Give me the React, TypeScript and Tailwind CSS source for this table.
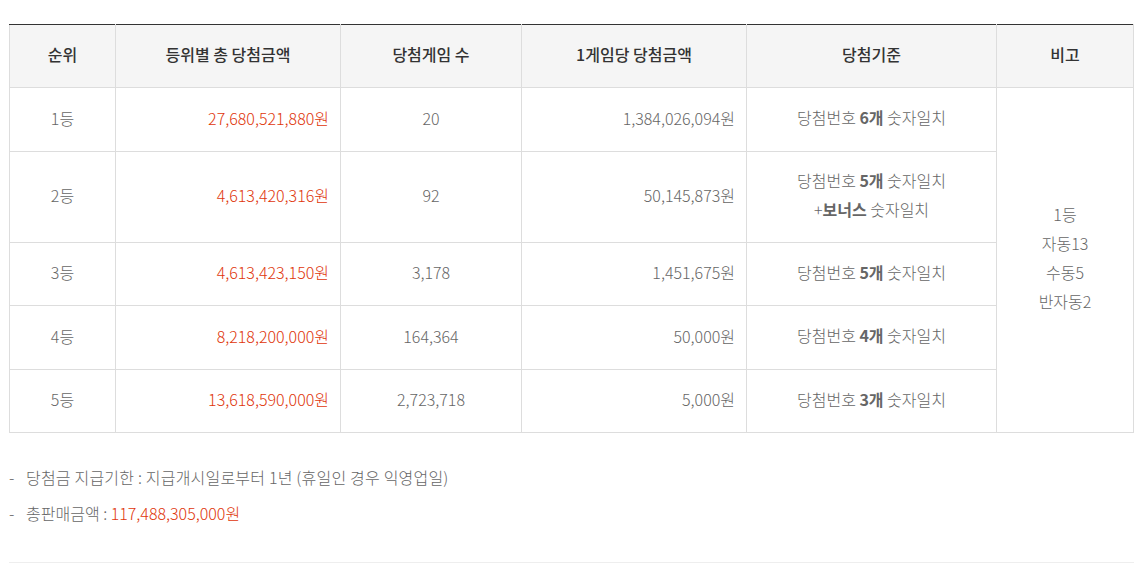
const rows = [
  { rank: "1등", total: "27,680,521,880원", games: "20", per: "1,384,026,094원", n: "6개", bonus: false },
  { rank: "2등", total: "4,613,420,316원", games: "92", per: "50,145,873원", n: "5개", bonus: true },
  { rank: "3등", total: "4,613,423,150원", games: "3,178", per: "1,451,675원", n: "5개", bonus: false },
  { rank: "4등", total: "8,218,200,000원", games: "164,364", per: "50,000원", n: "4개", bonus: false },
  { rank: "5등", total: "13,618,590,000원", games: "2,723,718", per: "5,000원", n: "3개", bonus: false },
]

const heights = ["h-[64px]", "h-[91px]", "h-[63px]", "h-[64px]", "h-[63px]"]

const App = () => {
  return (
    <div
      className="bg-white w-[1146px] h-[567px] pt-[24px] text-[16px] text-[#666]"
      style={{ fontFamily: '"Noto Sans CJK KR", "Noto Sans", sans-serif' }}
    >
      <table className="ml-[9px] w-[1125px] border-collapse border-t border-t-[#333] table-fixed">
        <colgroup>
          <col className="w-[106px]" />
          <col className="w-[225px]" />
          <col className="w-[181px]" />
          <col className="w-[225px]" />
          <col className="w-[250px]" />
          <col className="w-[137px]" />
        </colgroup>
        <thead>
          <tr className="h-[63px] bg-[#f5f5f5] text-[#333] font-medium">
            <th className="border border-[#ddd] border-t-[#333] font-medium pb-[4px]">순위</th>
            <th className="border border-[#ddd] border-t-[#333] font-medium pb-[4px]">등위별 총 당첨금액</th>
            <th className="border border-[#ddd] border-t-[#333] font-medium pb-[4px]">당첨게임 수</th>
            <th className="border border-[#ddd] border-t-[#333] font-medium pb-[4px]">1게임당 당첨금액</th>
            <th className="border border-[#ddd] border-t-[#333] font-medium pb-[4px]">당첨기준</th>
            <th className="border border-[#ddd] border-t-[#333] font-medium pb-[4px]">비고</th>
          </tr>
        </thead>
        <tbody className="font-light">
          {rows.map((r, i) => (
            <tr key={r.rank} className={heights[i]}>
              <td className="border border-[#ddd] text-center pb-[4px]">{r.rank}</td>
              <td className="border border-[#ddd] text-right pr-[11px] pb-[4px] text-[#e0360b]">{r.total}</td>
              <td className="border border-[#ddd] text-center pb-[4px]">{r.games}</td>
              <td className="border border-[#ddd] text-right pr-[11px] pb-[4px]">{r.per}</td>
              <td className="border border-[#ddd] text-center leading-[29px] pb-[4px]">
                <div>
                  당첨번호 <b className="font-bold">{r.n}</b> 숫자일치
                </div>
                {r.bonus && (
                  <div>
                    +<b className="font-bold">보너스</b> 숫자일치
                  </div>
                )}
              </td>
              {i === 0 && (
                <td rowSpan={5} className="border border-[#ddd] text-center leading-[29px] pb-[4px]">
                  <div>1등</div>
                  <div>자동13</div>
                  <div>수동5</div>
                  <div>반자동2</div>
                </td>
              )}
            </tr>
          ))}
        </tbody>
      </table>

      <ul className="mt-[26px] ml-[9px] font-light leading-[36px]">
        <li className="flex">
          <span className="w-[17px]">-</span>
          <span className="tracking-[0.2px]">당첨금 지급기한 : 지급개시일로부터 1년 (휴일인 경우 익영업일)</span>
        </li>
        <li className="flex">
          <span className="w-[17px]">-</span>
          <span>
            총판매금액 : <span className="text-[#e0360b]">117,488,305,000원</span>
          </span>
        </li>
      </ul>

      <div className="ml-[9px] mt-[31px] w-[1125px] border-t border-[#eee]" />
    </div>
  )
}

export default App
